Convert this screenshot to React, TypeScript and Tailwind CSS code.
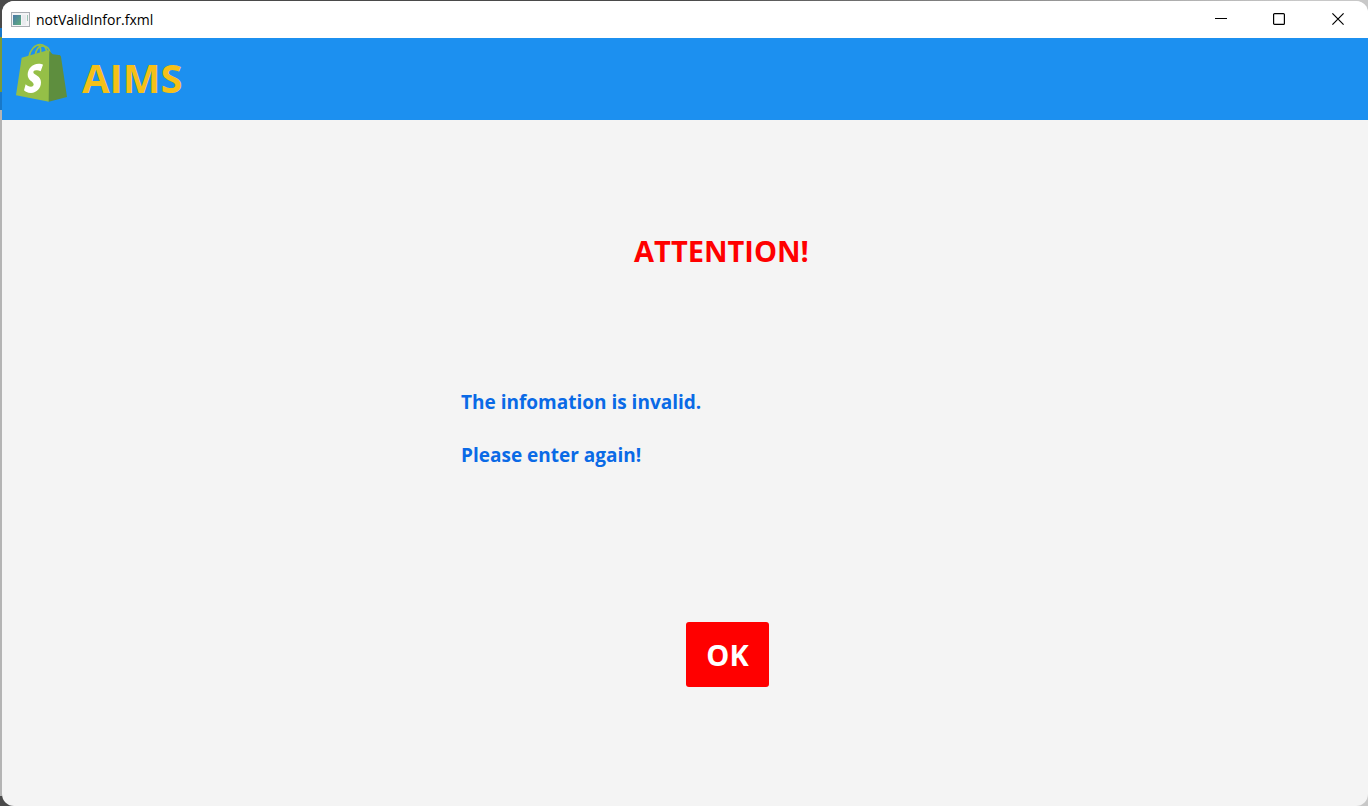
import React from "react";

function AppIcon() {
  return (
    <svg width="19" height="16" viewBox="0 0 19 16" aria-hidden="true">
      <defs>
        <linearGradient id="pane" x1="0" y1="0" x2="1" y2="1">
          <stop offset="0" stopColor="#4a78a8" />
          <stop offset="1" stopColor="#5fae7c" />
        </linearGradient>
      </defs>
      <rect x="0.5" y="0.5" width="18" height="14" fill="#f4f4f6" stroke="#a9adb3" />
      <rect x="2" y="3" width="8" height="10" fill="url(#pane)" />
      <rect x="11" y="3" width="4" height="10" fill="#e9ebee" />
      <rect x="16" y="3" width="1" height="6" fill="#9cc3b4" />
    </svg>
  );
}

function BagLogo() {
  return (
    <svg width="64" height="68" viewBox="0 0 192 204" aria-label="Shopping bag" role="img">
      <g fill="none" stroke="#95bf47" strokeWidth="5">
        <path d="M57 56C61 35 75 20 90 20c13 0 19 8 20 22" />
        <path d="M76 50C79 34 88 24 99 24c11 0 19 7 21 22" />
        <path d="M92 45c1-12-1-20-7-24" />
      </g>
      <path d="M35 59 113 37l6 3-2 151L18 172z" fill="#95bf47" />
      <path d="M118 39l10 10 18 2c4 0 6 2 7 5l18 121-55 14z" fill="#5e8e3e" />
      <path
        d="M99 80l-7 20c-5-3-10-4-14-3-5 0-8 2-8 6 0 8 23 10 23 30 0 18-13 32-30 32-11 0-17-4-21-8l5-18c4 4 10 7 16 7 5 0 8-3 8-7 0-9-18-11-18-29 0-17 13-33 33-33 5 0 10 1 13 3z"
        fill="#fff"
      />
    </svg>
  );
}

function TitleBar() {
  return (
    <div className="flex h-[37px] items-center bg-white">
      <div className="flex flex-1 items-center gap-1.5 pl-[9px]">
        <AppIcon />
        <span className="font-['Open_Sans',sans-serif] text-sm text-black">notValidInfor.fxml</span>
      </div>
      <div className="flex h-9 items-center self-start">
        <button type="button" aria-label="Minimize" className="flex h-full w-[58px] items-center justify-center">
          <svg width="12" height="12" viewBox="0 0 12 12">
            <path d="M0 5.5h12" stroke="#000" />
          </svg>
        </button>
        <button type="button" aria-label="Maximize" className="flex h-full w-[58px] items-center justify-center">
          <svg width="12" height="12" viewBox="0 0 12 12">
            <rect x="0.6" y="0.6" width="10.8" height="10.8" rx="1" fill="none" stroke="#000" strokeWidth="1.2" />
          </svg>
        </button>
        <button type="button" aria-label="Close" className="flex h-full w-[60px] items-center justify-center">
          <svg width="12" height="12" viewBox="0 0 12 12">
            <path d="M0.4 0.4l11.2 11.2M11.6 0.4L0.4 11.6" stroke="#000" strokeWidth="1.2" />
          </svg>
        </button>
      </div>
    </div>
  );
}

export default function App() {
  return (
    <div className="flex min-h-screen bg-[linear-gradient(to_right,#4a4a4a_50%,#c8c8c8_95%)] font-['Open_Sans',sans-serif]">
      <div className="flex w-0.5 shrink-0 flex-col" aria-hidden="true">
        <div className="h-7 bg-[#4a4a4a]" />
        <div className="h-[9px] bg-[#1878c8]" />
        <div className="h-[55px] bg-[#7a9a3a]" />
        <div className="h-[18px] bg-[#1878c8]" />
        <div className="flex-1 bg-[#b4b4b4]" />
        <div className="h-2.5 bg-[#4a4a4a]" />
      </div>
      <div className="mt-px flex flex-1 flex-col overflow-hidden rounded-xl bg-[#f4f4f4]">
        <TitleBar />
        <header className="flex h-[82px] items-start gap-2 bg-[#1c90f0] pl-2">
          <BagLogo />
          <h1 className="pt-3 text-[40px] leading-[56px] font-bold text-[#f5c018]">AIMS</h1>
        </header>
        <main className="flex-1 pt-[109px] pl-[85px]">
          <div className="mx-auto w-[533px]">
            <h2 className="pr-3 text-center text-[29px] leading-[44px] font-bold text-[#ff0000]">ATTENTION!</h2>
            <div className="mt-[103px] text-[19px] leading-[53px] font-bold text-[#0a6ae6]">
              <p>The infomation is invalid.</p>
              <p>Please enter again!</p>
            </div>
            <div className="mt-[140px] flex justify-center">
              <button type="button" className="h-[65px] rounded-[3px] bg-[#ff0000] px-5 text-[29px] font-bold text-white">
                OK
              </button>
            </div>
          </div>
        </main>
      </div>
    </div>
  );
}
